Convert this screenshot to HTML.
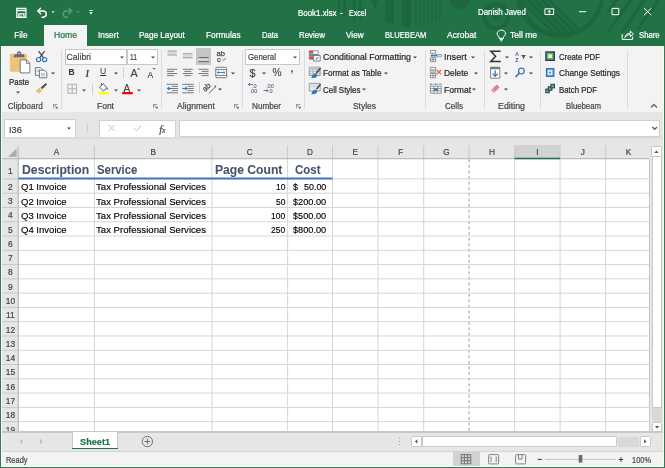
<!DOCTYPE html>
<html><head><meta charset="utf-8">
<style>
*{margin:0;padding:0;box-sizing:border-box}
html,body{width:665px;height:468px;overflow:hidden;background:#217346}
.a{position:absolute;display:block}
.t{position:absolute;white-space:nowrap;font-family:"Liberation Sans",sans-serif;line-height:1}
</style></head><body>
<div class="a" style="left:0;top:0;width:665px;height:468px;overflow:hidden;will-change:transform">
<div class="a" style="left:0.00px;top:0.00px;width:665.00px;height:468.00px;background:#217346;"></div>
<svg class="a" style="left:0px;top:0px" width="665" height="46" viewBox="0 0 665 46">
<defs>
<clipPath id="cpA"><circle cx="410" cy="-32" r="59"/></clipPath>
<clipPath id="cpB"><circle cx="561" cy="-6.5" r="39.5"/></clipPath>
<clipPath id="cpT"><rect x="0" y="0" width="665" height="46"/></clipPath>
</defs>
<g fill="#1d673e" clip-path="url(#cpA)">
<path d="M371.5 0h6.5l-3.2 11z"/>
<path d="M385 0h9v40h-9z"/>
<path d="M401.6 0h9.3v40h-9.3z"/>
<path d="M415 0h1.6v40H415zM419 0h1.6v40H419zM423 0h1.6v40H423zM427 0h1.6v40H427zM431 0h1.6v40H431zM435 0h1.6v40H435zM439 0h1.6v40H439z"/>
</g>
<path d="M449.5 0a10 9 0 0 0 20 0z" fill="#1d673e"/>
<path d="M338 0h2v12.5h-2zM343.5 0h2.4v17.5h-2.4zM353 0h2.5v23h-2.5zM359 0h2.5v19h-2.5z" fill="#1d673e"/>
<circle cx="496.2" cy="16.5" r="12.1" fill="none" stroke="#1d673e" stroke-width="4.2"/>
<circle cx="496.2" cy="16.5" r="4.3" fill="#1d673e"/>
<circle cx="560" cy="-6" r="44" fill="#1d673e"/>
<circle cx="561" cy="-6.5" r="39.5" fill="#217346"/>
<g stroke="#1d673e" stroke-width="3.2" clip-path="url(#cpB)">
<path d="M519 -2l40 40M526 -2l40 40M533 -2l40 40M540 -2l40 40M547 -2l36 36"/>
</g>
<g stroke="#1d673e" stroke-width="3" clip-path="url(#cpT)">
<path d="M618 -2l-10 14M632 -2l-24 34M646 -2l-24 34M660 -2l-22 31"/>
</g>
</svg>
<svg class="a" style="left:0px;top:0px" width="665" height="26" viewBox="0 0 665 26">
<g fill="none" stroke="#fff" stroke-width="1.3">
<path d="M16.8 8.5h9.1v8.8h-9.1z"/>
<path d="M16.8 10.6h9.1"/>
<path d="M18.9 17.3v-3.5h5v3.5"/>
</g>
<path d="M20.2 15.6h1.6v1.7h-1.6z" fill="#fff"/>
<g fill="none" stroke="#fff" stroke-width="1.4" stroke-linecap="round" stroke-linejoin="round">
<path d="M38 11h5.2a3.1 3.1 0 0 1 0 6.2h-1.2"/>
<path d="M40.6 8.2L37.8 11l2.8 2.8"/>
</g>
<path d="M51.6 11.3h3l-1.5 1.8z" fill="#fff"/>
<g fill="none" stroke="#5f9d7a" stroke-width="1.4" stroke-linecap="round" stroke-linejoin="round">
<path d="M71.5 11h-5.2a3.1 3.1 0 0 0 0 6.2h1.2"/>
<path d="M68.9 8.2l2.8 2.8-2.8 2.8"/>
</g>
<path d="M76.6 11.3h3l-1.5 1.8z" fill="#5f9d7a"/>
<path d="M89.3 10h3.4v0.9h-3.4z M89.2 12.3h3.6l-1.8 2.1z" fill="#fff"/>
<g fill="none" stroke="#fff" stroke-width="1">
<path d="M544.9 8.8h8.7v5.7h-8.7z"/>
<path d="M549.25 13.8v-3.2M547.6 12l1.65-1.6 1.65 1.6"/>
</g>
<path d="M579 11.2h7.2v1h-7.2z" fill="#fff"/>
<path d="M612 8.4h6.8v6.3H612z" fill="none" stroke="#fff" stroke-width="1"/>
<path d="M644 8.2l7.3 7M651.3 8.2l-7.3 7" fill="none" stroke="#fff" stroke-width="1"/>
</svg>
<div class="t" style="left:297.80px;top:8.99px;font-size:8.4px;color:#ffffff;transform:scaleX(0.9478);transform-origin:0 0;-webkit-text-stroke:0.2px #ffffff;">Book1.xlsx</div>
<div class="t" style="left:340.40px;top:8.99px;font-size:8.4px;color:#ffffff;transform:scaleX(0.9651);transform-origin:0 0;-webkit-text-stroke:0.2px #ffffff;">-</div>
<div class="t" style="left:349.00px;top:8.99px;font-size:8.4px;color:#ffffff;transform:scaleX(0.8471);transform-origin:0 0;-webkit-text-stroke:0.2px #ffffff;">Excel</div>
<div class="t" style="left:477.90px;top:8.96px;font-size:8.2px;color:#ffffff;transform:scaleX(0.9641);transform-origin:0 0;-webkit-text-stroke:0.2px #ffffff;">Danish Javed</div>
<div class="a" style="left:44.30px;top:25.00px;width:42.50px;height:22.00px;background:#f3f3f3;"></div>
<div class="t" style="left:14.30px;top:31.96px;font-size:8.2px;color:#ffffff;-webkit-text-stroke:0.2px #ffffff;">File</div>
<div class="t" style="left:97.50px;top:31.96px;font-size:8.2px;color:#ffffff;transform:scaleX(1.0142);transform-origin:0 0;-webkit-text-stroke:0.2px #ffffff;">Insert</div>
<div class="t" style="left:138.90px;top:31.96px;font-size:8.2px;color:#ffffff;-webkit-text-stroke:0.2px #ffffff;">Page Layout</div>
<div class="t" style="left:205.80px;top:31.96px;font-size:8.2px;color:#ffffff;transform:scaleX(1.0124);transform-origin:0 0;-webkit-text-stroke:0.2px #ffffff;">Formulas</div>
<div class="t" style="left:261.90px;top:31.96px;font-size:8.2px;color:#ffffff;transform:scaleX(0.9295);transform-origin:0 0;-webkit-text-stroke:0.2px #ffffff;">Data</div>
<div class="t" style="left:299.30px;top:31.96px;font-size:8.2px;color:#ffffff;transform:scaleX(0.9670);transform-origin:0 0;-webkit-text-stroke:0.2px #ffffff;">Review</div>
<div class="t" style="left:346.00px;top:31.96px;font-size:8.2px;color:#ffffff;-webkit-text-stroke:0.2px #ffffff;">View</div>
<div class="t" style="left:384.50px;top:31.96px;font-size:8.2px;color:#ffffff;transform:scaleX(0.9270);transform-origin:0 0;-webkit-text-stroke:0.2px #ffffff;">BLUEBEAM</div>
<div class="t" style="left:446.90px;top:31.96px;font-size:8.2px;color:#ffffff;transform:scaleX(1.0368);transform-origin:0 0;-webkit-text-stroke:0.2px #ffffff;">Acrobat</div>
<div class="t" style="left:510.30px;top:31.96px;font-size:8.2px;color:#ffffff;transform:scaleX(1.0433);transform-origin:0 0;-webkit-text-stroke:0.2px #ffffff;">Tell me</div>
<div class="t" style="left:638.60px;top:31.96px;font-size:8.2px;color:#ffffff;transform:scaleX(0.9460);transform-origin:0 0;-webkit-text-stroke:0.2px #ffffff;">Share</div>
<div class="t" style="left:53.70px;top:31.29px;font-size:8.4px;color:#217346;transform:scaleX(1.0309);transform-origin:0 0;-webkit-text-stroke:0.2px #217346;">Home</div>
<svg class="a" style="left:0px;top:25px" width="665" height="21" viewBox="0 25 665 21">
<g fill="none" stroke="#fff" stroke-width="1">
<path d="M499.8 39.6h3M500.3 40.8h2"/>
<path d="M499.2 38.4v-1.6A4.2 3.6 0 1 1 503.4 36.8v1.6z"/>
<path d="M622.2 34v5.4h10.4v-2.8"/>
<path d="M624.8 37.6c0.6-3 2.6-4.4 5.6-4.4v-2.1l3 2.8-3 2.8v-2.1c-2.6 0-4.2 1.1-5.6 3z"/>
</g>
</svg>
<div class="a" style="left:1.00px;top:46.00px;width:663.00px;height:66.00px;background:#f3f3f3;"></div>
<div class="a" style="left:1.00px;top:111.50px;width:663.00px;height:1.00px;background:#d8d8d8;"></div>
<div class="a" style="left:61.40px;top:49.50px;width:1.00px;height:59.00px;background:#dcdcdc;"></div>
<div class="a" style="left:161.00px;top:49.50px;width:1.00px;height:59.00px;background:#dcdcdc;"></div>
<div class="a" style="left:241.80px;top:49.50px;width:1.00px;height:59.00px;background:#dcdcdc;"></div>
<div class="a" style="left:303.80px;top:49.50px;width:1.00px;height:59.00px;background:#dcdcdc;"></div>
<div class="a" style="left:424.50px;top:49.50px;width:1.00px;height:59.00px;background:#dcdcdc;"></div>
<div class="a" style="left:484.20px;top:49.50px;width:1.00px;height:59.00px;background:#dcdcdc;"></div>
<div class="a" style="left:539.50px;top:49.50px;width:1.00px;height:59.00px;background:#dcdcdc;"></div>
<div class="a" style="left:627.30px;top:49.50px;width:1.00px;height:59.00px;background:#dcdcdc;"></div>
<div class="t" style="left:7.70px;top:103.46px;font-size:8.2px;color:#444;-webkit-text-stroke:0.2px #444;">Clipboard</div>
<div class="t" style="left:97.00px;top:103.46px;font-size:8.2px;color:#444;transform:scaleX(1.0361);transform-origin:0 0;-webkit-text-stroke:0.2px #444;">Font</div>
<div class="t" style="left:176.50px;top:103.46px;font-size:8.2px;color:#444;transform:scaleX(1.0421);transform-origin:0 0;-webkit-text-stroke:0.2px #444;">Alignment</div>
<div class="t" style="left:251.50px;top:103.46px;font-size:8.2px;color:#444;transform:scaleX(0.9943);transform-origin:0 0;-webkit-text-stroke:0.2px #444;">Number</div>
<div class="t" style="left:352.50px;top:103.46px;font-size:8.2px;color:#444;transform:scaleX(1.0300);transform-origin:0 0;-webkit-text-stroke:0.2px #444;">Styles</div>
<div class="t" style="left:445.00px;top:103.46px;font-size:8.2px;color:#444;transform:scaleX(0.9876);transform-origin:0 0;-webkit-text-stroke:0.2px #444;">Cells</div>
<div class="t" style="left:498.00px;top:103.46px;font-size:8.2px;color:#444;transform:scaleX(1.0768);transform-origin:0 0;-webkit-text-stroke:0.2px #444;">Editing</div>
<div class="t" style="left:566.00px;top:103.46px;font-size:8.2px;color:#444;transform:scaleX(0.9479);transform-origin:0 0;-webkit-text-stroke:0.2px #444;">Bluebeam</div>
<svg class="a" style="left:53.2px;top:104.1px" width="5" height="5" viewBox="0 0 5 5"><path d="M0.4 4.2V0.4h3.8" fill="none" stroke="#777" stroke-width="0.8"/><path d="M1.5 1.5l2.3 2.3" stroke="#555" stroke-width="0.8"/><path d="M4.6 2.2v2.4H2.2z" fill="#555"/></svg>
<svg class="a" style="left:153.2px;top:104.1px" width="5" height="5" viewBox="0 0 5 5"><path d="M0.4 4.2V0.4h3.8" fill="none" stroke="#777" stroke-width="0.8"/><path d="M1.5 1.5l2.3 2.3" stroke="#555" stroke-width="0.8"/><path d="M4.6 2.2v2.4H2.2z" fill="#555"/></svg>
<svg class="a" style="left:233.7px;top:104.1px" width="5" height="5" viewBox="0 0 5 5"><path d="M0.4 4.2V0.4h3.8" fill="none" stroke="#777" stroke-width="0.8"/><path d="M1.5 1.5l2.3 2.3" stroke="#555" stroke-width="0.8"/><path d="M4.6 2.2v2.4H2.2z" fill="#555"/></svg>
<svg class="a" style="left:295.7px;top:104.1px" width="5" height="5" viewBox="0 0 5 5"><path d="M0.4 4.2V0.4h3.8" fill="none" stroke="#777" stroke-width="0.8"/><path d="M1.5 1.5l2.3 2.3" stroke="#555" stroke-width="0.8"/><path d="M4.6 2.2v2.4H2.2z" fill="#555"/></svg>
<svg class="a" style="left:650px;top:103px" width="8" height="6" viewBox="0 0 8 6"><path d="M1 4.5l3-3 3 3" fill="none" stroke="#555" stroke-width="1.1"/></svg>
<svg class="a" style="left:0px;top:46px" width="62" height="65" viewBox="0 46 62 65">
<rect x="9.9" y="53.7" width="17.1" height="18" rx="1.2" fill="#ebc47a"/>
<path d="M13.6 57.2l0.8-3h2.6v-0.8a2.1 2.1 0 0 1 4.2 0v0.8h2.6l0.8 3z" fill="#6a6a6a"/>
<circle cx="19.1" cy="53.6" r="0.75" fill="#f3f3f3"/>
<path d="M20.2 59.9h6.4l3.2 3.2v9.8h-9.6z" fill="#fff" stroke="#6d6d6d" stroke-width="0.9"/>
<path d="M26.4 59.9v3.4h3.4" fill="none" stroke="#6d6d6d" stroke-width="0.9"/>
</svg>
<div class="t" style="left:8.50px;top:77.62px;font-size:8.6px;color:#262626;transform:scaleX(0.9185);transform-origin:0 0;-webkit-text-stroke:0.2px #262626;">Paste</div>
<svg class="a" style="left:16.00px;top:90.80px" width="4" height="3" viewBox="0 0 4 3"><path d="M0 0.5h4L2 2.6z" fill="#444"/></svg>
<svg class="a" style="left:0px;top:46px" width="62" height="65" viewBox="0 46 62 65">
<g fill="none" stroke="#444" stroke-width="1.2"><path d="M38.6 51.2l5 6.6M44.6 51.2l-5 6.6"/></g>
<circle cx="38.6" cy="59.6" r="2.1" fill="none" stroke="#2e75b6" stroke-width="1.2"/>
<circle cx="44.6" cy="59.6" r="2.1" fill="none" stroke="#2e75b6" stroke-width="1.2"/>
<path d="M35.4 67.6h5l2 2v5.8h-7z" fill="#fff" stroke="#666" stroke-width="0.9"/>
<path d="M36.6 70h3.4M36.6 71.6h3.4" stroke="#7fa7d3" stroke-width="0.8"/>
<path d="M39.4 70.2h5.2l2.2 2.2v5.4h-7.4z" fill="#fff" stroke="#666" stroke-width="0.9"/>
<path d="M40.8 72.8h4.4v3.6h-4.4z" fill="#b4cfec"/>
<path d="M35.8 91l3.4-3.6 3.2 3.2-3.6 3.2z" fill="#e8c175"/>
<path d="M39.6 87.2l3.4 3.2" stroke="#f3f3f3" stroke-width="0.8"/>
<path d="M41.4 88.4l5-4.6" stroke="#555" stroke-width="2.2"/>
</svg>
<svg class="a" style="left:51.00px;top:71.60px" width="4" height="3" viewBox="0 0 4 3"><path d="M0 0.5h4L2 2.6z" fill="#444"/></svg>
<div class="a" style="left:65.30px;top:48.60px;width:62.20px;height:16.10px;background:#fff;border:1px solid #c8c8c8"></div>
<div class="a" style="left:127.30px;top:48.60px;width:30.30px;height:16.10px;background:#fff;border:1px solid #c8c8c8"></div>
<div class="t" style="left:66.60px;top:52.62px;font-size:8.6px;color:#444;-webkit-text-stroke:0.2px #444;">Calibri</div>
<div class="t" style="left:130.30px;top:52.24px;font-size:9.4px;color:#444;transform:scaleX(0.7276);transform-origin:0 0;-webkit-text-stroke:0.2px #444;">11</div>
<svg class="a" style="left:120.00px;top:55.80px" width="4" height="3" viewBox="0 0 4 3"><path d="M0 0.5h4L2 2.6z" fill="#444"/></svg>
<svg class="a" style="left:150.70px;top:55.80px" width="4" height="3" viewBox="0 0 4 3"><path d="M0 0.5h4L2 2.6z" fill="#444"/></svg>
<div class="t" style="left:68.4px;top:67.9px;font-size:8.6px;font-weight:bold;color:#333">B</div>
<div class="t" style="left:85.6px;top:68.6px;font-size:9.6px;font-style:italic;font-weight:bold;font-family:'Liberation Serif';color:#444">I</div>
<div class="t" style="left:100.1px;top:67.4px;font-size:8.6px;color:#333;text-decoration:underline">U</div>
<svg class="a" style="left:113.60px;top:71.80px" width="4" height="3" viewBox="0 0 4 3"><path d="M0 0.5h4L2 2.6z" fill="#444"/></svg>
<div class="a" style="left:123.30px;top:67.00px;width:0.80px;height:11.00px;background:#d0d0d0;"></div>
<div class="t" style="left:130.4px;top:68.0px;font-size:10.8px;color:#444;-webkit-text-stroke:0.15px #444">A</div>
<div class="t" style="left:147.4px;top:70.6px;font-size:8.6px;color:#444;-webkit-text-stroke:0.12px #444">A</div>
<svg class="a" style="left:0px;top:46px" width="665" height="65" viewBox="0 46 665 65">
<path d="M137 69.5l1.6-1.8 1.6 1.8z" fill="#2e75b6"/>
<path d="M152.5 68l1.6 1.8 1.6-1.8z" fill="#2e75b6"/>
<g fill="none" stroke="#b4b4b4" stroke-width="1.1"><path d="M67.9 84.2h8.6v9h-8.6zM72.2 84.2v9M67.9 88.7h8.6"/></g>
<path d="M101.5 83.2v2.2" stroke="#555" stroke-width="0.9"/>
<path d="M99.6 87.2l3.6-3.4 3.8 3.8-3.6 3.4z" fill="#fff" stroke="#555" stroke-width="1"/>
<path d="M106.4 87.2c1.4 0.5 1.9 1.8 1.5 2.8c-1-0.5-1.8-1.5-1.5-2.8z" fill="#2e75b6"/>
<path d="M98.4 91.9h10.6v2.4h-10.6z" fill="#ffff00"/>
<path d="M122.2 91.9h10.6v2.4h-10.6z" fill="#ff0000"/>
</svg>
<svg class="a" style="left:82.00px;top:89.30px" width="4" height="3" viewBox="0 0 4 3"><path d="M0 0.5h4L2 2.6z" fill="#444"/></svg>
<div class="t" style="left:123.4px;top:84.4px;font-size:10px;color:#444;-webkit-text-stroke:0.15px #444">A</div>
<div class="a" style="left:92.20px;top:84.00px;width:0.80px;height:11.00px;background:#d0d0d0;"></div>
<svg class="a" style="left:113.50px;top:89.30px" width="4" height="3" viewBox="0 0 4 3"><path d="M0 0.5h4L2 2.6z" fill="#444"/></svg>
<svg class="a" style="left:137.00px;top:89.30px" width="4" height="3" viewBox="0 0 4 3"><path d="M0 0.5h4L2 2.6z" fill="#444"/></svg>
<div class="a" style="left:196.10px;top:48.40px;width:15.00px;height:16.20px;background:#c5c5c5;"></div>
<svg class="a" style="left:0px;top:46px" width="665" height="65" viewBox="0 46 665 65"><path d="M167.5 51.8h9.3v2.4h-9.3z" fill="#d9d9d9"/><path d="M167.5 51.0h9.3" stroke="#8c8c8c" stroke-width="0.9"/><path d="M167.5 55.0h9.3" stroke="#8c8c8c" stroke-width="0.9"/><path d="M182.9 54.599999999999994h9.8v2.4h-9.8z" fill="#d9d9d9"/><path d="M182.9 53.8h9.8" stroke="#8c8c8c" stroke-width="0.9"/><path d="M182.9 57.8h9.8" stroke="#8c8c8c" stroke-width="0.9"/><path d="M198.5 58.4h10.2v2.4h-10.2z" fill="#d9d9d9"/><path d="M198.5 57.6h10.2" stroke="#5a5a5a" stroke-width="0.9"/><path d="M198.5 61.6h10.2" stroke="#5a5a5a" stroke-width="0.9"/><text x="216.6" y="56.4" font-size="7.6" fill="#4a4a4a" font-family="Liberation Sans" stroke="#4a4a4a" stroke-width="0.25">ab</text><text x="216.9" y="61.6" font-size="7.6" fill="#4a4a4a" font-family="Liberation Sans" stroke="#4a4a4a" stroke-width="0.25">c</text><path d="M222.3 59.3l1.2 1.2 2.3-2.6" fill="none" stroke="#2e75b6" stroke-width="0.9"/><path d="M167.0 69.3h10.2" stroke="#6b6b6b" stroke-width="0.9"/><path d="M182.70000000000002 69.3h10.2" stroke="#6b6b6b" stroke-width="0.9"/><path d="M198.4 69.3h10.2" stroke="#6b6b6b" stroke-width="0.9"/><path d="M167.0 71.4h7.0" stroke="#6b6b6b" stroke-width="0.9"/><path d="M184.3 71.4h7.0" stroke="#6b6b6b" stroke-width="0.9"/><path d="M201.6 71.4h7.0" stroke="#6b6b6b" stroke-width="0.9"/><path d="M167.0 73.5h10.2" stroke="#6b6b6b" stroke-width="0.9"/><path d="M182.70000000000002 73.5h10.2" stroke="#6b6b6b" stroke-width="0.9"/><path d="M198.4 73.5h10.2" stroke="#6b6b6b" stroke-width="0.9"/><path d="M167.0 75.6h7.0" stroke="#6b6b6b" stroke-width="0.9"/><path d="M184.3 75.6h7.0" stroke="#6b6b6b" stroke-width="0.9"/><path d="M201.6 75.6h7.0" stroke="#6b6b6b" stroke-width="0.9"/><rect x="215.8" y="67.3" width="10.8" height="10.4" rx="1" fill="#fff" stroke="#6b6b6b" stroke-width="0.9"/><path d="M215.8 69.6h10.8M215.8 75.4h10.8" stroke="#6b6b6b" stroke-width="0.9"/><path d="M217.4 72.5h7.6M218.8 71.3l-1.4 1.2 1.4 1.2M223.6 71.3l1.4 1.2-1.4 1.2" fill="none" stroke="#2e75b6" stroke-width="0.9"/><path d="M166.6 84.3h11.4" stroke="#6b6b6b" stroke-width="0.9"/><path d="M166.6 92.8h11.4" stroke="#6b6b6b" stroke-width="0.9"/><path d="M171.79999999999998 86.4h6.2" stroke="#6b6b6b" stroke-width="0.9"/><path d="M171.79999999999998 88.5h6.2" stroke="#6b6b6b" stroke-width="0.9"/><path d="M171.79999999999998 90.6h6.2" stroke="#6b6b6b" stroke-width="0.9"/><path d="M172.3 88.5h-4.6" stroke="#2e75b6" stroke-width="1.2"/><path d="M169.3 86.4l-2.6 2.1 2.6 2.1z" fill="#2e75b6"/><path d="M182.3 84.3h11.4" stroke="#6b6b6b" stroke-width="0.9"/><path d="M182.3 92.8h11.4" stroke="#6b6b6b" stroke-width="0.9"/><path d="M187.5 86.4h6.2" stroke="#6b6b6b" stroke-width="0.9"/><path d="M187.5 88.5h6.2" stroke="#6b6b6b" stroke-width="0.9"/><path d="M187.5 90.6h6.2" stroke="#6b6b6b" stroke-width="0.9"/><path d="M182.3 88.5h4.6" stroke="#2e75b6" stroke-width="1.2"/><path d="M185.3 86.4l2.6 2.1-2.6 2.1z" fill="#2e75b6"/><text x="0" y="0" font-size="7.8" fill="#4a4a4a" font-family="Liberation Sans" stroke="#4a4a4a" stroke-width="0.25" transform="translate(205.2 92) rotate(-45)">ab</text><path d="M209 93.3l6.6-6.6" stroke="#505050" stroke-width="0.9"/><path d="M214 85.8l2.2-0.4-0.4 2.2z" fill="#505050"/></svg>
<svg class="a" style="left:230.80px;top:71.50px" width="4" height="3" viewBox="0 0 4 3"><path d="M0 0.5h4L2 2.6z" fill="#444"/></svg>
<div class="a" style="left:198.50px;top:82.20px;width:0.80px;height:11.30px;background:#d0d0d0;"></div>
<svg class="a" style="left:218.40px;top:87.50px" width="4" height="3" viewBox="0 0 4 3"><path d="M0 0.5h4L2 2.6z" fill="#444"/></svg>
<div class="a" style="left:245.00px;top:48.60px;width:55.00px;height:16.10px;background:#fff;border:1px solid #c8c8c8"></div>
<div class="t" style="left:247.50px;top:52.62px;font-size:8.6px;color:#444;transform:scaleX(0.9151);transform-origin:0 0;-webkit-text-stroke:0.2px #444;">General</div>
<svg class="a" style="left:293.00px;top:55.80px" width="4" height="3" viewBox="0 0 4 3"><path d="M0 0.5h4L2 2.6z" fill="#444"/></svg>
<div class="t" style="left:249.6px;top:68.3px;font-size:10.6px;color:#444;-webkit-text-stroke:0.2px #444">$</div>
<svg class="a" style="left:262.00px;top:71.80px" width="4" height="3" viewBox="0 0 4 3"><path d="M0 0.5h4L2 2.6z" fill="#444"/></svg>
<div class="t" style="left:272.6px;top:68.4px;font-size:10.2px;color:#444;-webkit-text-stroke:0.15px #444">%</div>
<div class="t" style="left:290.6px;top:63.8px;font-size:10px;font-weight:bold;color:#444">,</div>
<svg class="a" style="left:0px;top:46px" width="665" height="65" viewBox="0 46 665 65">
<text x="252" y="87.5" font-size="5.6" fill="#444" font-family="Liberation Sans">.0</text>
<text x="249.5" y="93.3" font-size="5.6" fill="#444" font-family="Liberation Sans">.00</text>
<path d="M253 84.5h-4.5M250 83l-1.5 1.5 1.5 1.5" fill="none" stroke="#2e75b6" stroke-width="0.9"/>
<text x="266" y="87.5" font-size="5.6" fill="#444" font-family="Liberation Sans">.00</text>
<text x="268" y="93.3" font-size="5.6" fill="#444" font-family="Liberation Sans">.0</text>
<path d="M263.5 90.5h4.5M266.5 89l1.5 1.5-1.5 1.5" fill="none" stroke="#2e75b6" stroke-width="0.9"/>
</svg>
<svg class="a" style="left:0px;top:46px" width="665" height="65" viewBox="0 46 665 65">
<path d="M309.3 50.8h9v8.4h-9z" fill="#fff" stroke="#7a7a7a" stroke-width="0.8"/>
<path d="M309.3 50.8h4v2.8h-4z" fill="#e0492f"/>
<path d="M309.3 53.9h8.5v2h-8.5z" fill="#4a86d0"/>
<path d="M309.3 56.2h4v3h-4z" fill="#e0492f"/>
<path d="M313.6 55.5h6.6v5.6h-6.6z" fill="#fff" stroke="#777" stroke-width="0.9"/>
<path d="M315.8 59.6l2.6-2.4" stroke="#333" stroke-width="1"/>
<path d="M309.3 67.2h10.8v8.4h-10.8z" fill="#e8eef6" stroke="#7a7a7a" stroke-width="0.8"/>
<path d="M309.3 69.5h10.8M309.3 71.6h10.8M309.3 73.6h10.8M312.9 67.2v8.4M316.5 67.2v8.4" stroke="#9a9a9a" stroke-width="0.6"/>
<path d="M309.3 67.2h10.8v2.3h-10.8z" fill="#c7c7c7"/>
<path d="M320.5 68l-4 5" stroke="#444" stroke-width="1.5"/>
<path d="M311.3 78.2l1.2-3.2 2.6-1.8 2.3 1.6-1.2 2.6z" fill="#2e75b6"/>
<path d="M309.3 83.4h10.8v7.6h-10.8z" fill="#fff" stroke="#7a7a7a" stroke-width="0.8"/>
<path d="M310.3 84.4h8.8v3.2h-8.8z" fill="#c9d9ec"/>
<path d="M310.3 87.8h8.8v2h-8.8z" fill="#e3ebf5"/>
<path d="M320.5 84.2l-4 5" stroke="#444" stroke-width="1.5"/>
<path d="M311.3 94.4l1.2-3.2 2.6-1.8 2.3 1.6-1.2 2.6z" fill="#2e75b6"/>
</svg>
<div class="t" style="left:322.80px;top:53.12px;font-size:8.6px;color:#262626;transform:scaleX(1.0171);transform-origin:0 0;-webkit-text-stroke:0.2px #262626;">Conditional Formatting</div>
<svg class="a" style="left:412.70px;top:55.80px" width="4" height="3" viewBox="0 0 4 3"><path d="M0 0.5h4L2 2.6z" fill="#444"/></svg>
<div class="t" style="left:322.80px;top:69.42px;font-size:8.6px;color:#262626;transform:scaleX(0.9512);transform-origin:0 0;-webkit-text-stroke:0.2px #262626;">Format as Table</div>
<svg class="a" style="left:383.50px;top:71.80px" width="4" height="3" viewBox="0 0 4 3"><path d="M0 0.5h4L2 2.6z" fill="#444"/></svg>
<div class="t" style="left:322.80px;top:85.82px;font-size:8.6px;color:#262626;transform:scaleX(0.9231);transform-origin:0 0;-webkit-text-stroke:0.2px #262626;">Cell Styles</div>
<svg class="a" style="left:362.00px;top:88.00px" width="4" height="3" viewBox="0 0 4 3"><path d="M0 0.5h4L2 2.6z" fill="#444"/></svg>
<svg class="a" style="left:0px;top:46px" width="665" height="65" viewBox="0 46 665 65">
<g fill="#fff" stroke="#7a7a7a" stroke-width="0.8">
<path d="M430.4 50.4h5.2v2.8h-5.2z"/>
<path d="M430.4 57.8h5.2v3.8h-5.2zM430.4 59.7h5.2M433 57.8v3.8"/>
<path d="M430.4 67.4h5.2v2.6h-5.2z"/>
<path d="M430.4 73.4h5.2v4.4h-5.2zM430.4 75.6h5.2M433 73.4v4.4"/>
<path d="M430.4 86.2h10.8v7h-10.8zM430.4 88.5h10.8M430.4 90.8h10.8M433.9 86.2v7M437.6 86.2v7"/>
</g>
<path d="M434 54.5h7.5v2.3H434z" fill="#d0dcea" stroke="#7a7a7a" stroke-width="0.6"/>
<path d="M437.5 55.6h-6.6M432.8 54l-1.9 1.6 1.9 1.6" fill="none" stroke="#2e75b6" stroke-width="1"/>
<path d="M430.4 70.6h5.2v2.2h-5.2z" fill="#c9d9ec" stroke="#7a7a7a" stroke-width="0.6"/>
<path d="M436.6 69.8l4.6 4.6M441.2 69.8l-4.6 4.6" stroke="#e8533f" stroke-width="1.1"/>
<path d="M434 88.5h3.6v2.3H434z" fill="#2e75b6"/>
<path d="M430.6 84.2h10.6" stroke="#2e75b6" stroke-width="0.8" stroke-dasharray="1.2 0.8"/>
<path d="M430.6 83.2v2M441 83.2v2M435.8 83.2v2" stroke="#2e75b6" stroke-width="0.7"/>
</svg>
<div class="t" style="left:443.70px;top:53.12px;font-size:8.6px;color:#262626;transform:scaleX(1.0600);transform-origin:0 0;-webkit-text-stroke:0.2px #262626;">Insert</div>
<svg class="a" style="left:471.00px;top:55.80px" width="4" height="3" viewBox="0 0 4 3"><path d="M0 0.5h4L2 2.6z" fill="#444"/></svg>
<div class="t" style="left:443.70px;top:69.42px;font-size:8.6px;color:#262626;transform:scaleX(0.9775);transform-origin:0 0;-webkit-text-stroke:0.2px #262626;">Delete</div>
<svg class="a" style="left:473.80px;top:71.80px" width="4" height="3" viewBox="0 0 4 3"><path d="M0 0.5h4L2 2.6z" fill="#444"/></svg>
<div class="t" style="left:443.70px;top:85.82px;font-size:8.6px;color:#262626;transform:scaleX(0.9950);transform-origin:0 0;-webkit-text-stroke:0.2px #262626;">Format</div>
<svg class="a" style="left:472.30px;top:88.00px" width="4" height="3" viewBox="0 0 4 3"><path d="M0 0.5h4L2 2.6z" fill="#444"/></svg>
<svg class="a" style="left:0px;top:46px" width="665" height="65" viewBox="0 46 665 65">
<path d="M500.6 51.2h-9.8l4.8 5.1-4.8 5.1h10" fill="none" stroke="#333" stroke-width="1.5" stroke-linejoin="miter"/>
<text x="514.9" y="55.7" font-size="5.4" font-weight="bold" fill="#2e75b6" font-family="Liberation Sans">A</text>
<text x="515.2" y="61.6" font-size="5.4" font-weight="bold" fill="#7030a0" font-family="Liberation Sans">Z</text>
<path d="M521 55h5.2l-2 2.3v1.8l-1.2-0.4v-1.4z" fill="#555"/>
<path d="M490.6 67.2h9.2v11h-9.2z" fill="#fff" stroke="#777" stroke-width="0.9"/>
<path d="M490.6 67.2h9.2v2h-9.2z" fill="#777"/>
<path d="M495.2 70.5v5.6" stroke="#2e75b6" stroke-width="1.3"/>
<path d="M492.6 73.6l2.6 2.8 2.6-2.8" fill="none" stroke="#2e75b6" stroke-width="1.3"/>
<circle cx="521.4" cy="71.1" r="2.9" fill="none" stroke="#2e75b6" stroke-width="1.2"/>
<path d="M519.3 73.2l-3.2 3.2" stroke="#2e75b6" stroke-width="1.5" stroke-linecap="round"/>
<path d="M491.2 90l5.6-5.6 2.8 2.8-5.6 5.6z" fill="#e8788a"/>
<path d="M492.6 88.6l2.8 2.8" stroke="#f3f3f3" stroke-width="0.7"/>
</svg>
<svg class="a" style="left:505.00px;top:55.80px" width="4" height="3" viewBox="0 0 4 3"><path d="M0 0.5h4L2 2.6z" fill="#444"/></svg>
<svg class="a" style="left:528.50px;top:55.80px" width="4" height="3" viewBox="0 0 4 3"><path d="M0 0.5h4L2 2.6z" fill="#444"/></svg>
<svg class="a" style="left:503.70px;top:71.80px" width="4" height="3" viewBox="0 0 4 3"><path d="M0 0.5h4L2 2.6z" fill="#444"/></svg>
<svg class="a" style="left:528.50px;top:71.80px" width="4" height="3" viewBox="0 0 4 3"><path d="M0 0.5h4L2 2.6z" fill="#444"/></svg>
<svg class="a" style="left:503.70px;top:88.30px" width="4" height="3" viewBox="0 0 4 3"><path d="M0 0.5h4L2 2.6z" fill="#444"/></svg>
<svg class="a" style="left:0px;top:46px" width="665" height="65" viewBox="0 46 665 65">
<path d="M545.2 51.3h9.8v9.7h-9.8z" fill="#1f3f73"/>
<path d="M546.6 52.7h7v6.9h-7z" fill="#6fb544"/>
<path d="M548.2 54.3h3.8v3.7h-3.8z" fill="#e9f5df"/>
<path d="M545.9 68h8.5v9h-8.5z" fill="#2e75b6"/>
<path d="M547.2 69.4h5.9v6.2h-5.9z" fill="#8fbbe6"/>
<path d="M548.2 70.4h3.9v4.2h-3.9z" fill="#fff"/>
<path d="M549.2 71.6h1.9v1.9h-1.9z" fill="#2e75b6"/>
<path d="M545.2 88.6h4.6v4.6h-4.6z" fill="#1f3f73"/><path d="M546.2 89.6h2.6v2.6h-2.6z" fill="#6fb544"/>
<path d="M547.8 86.2h4.6v4.6h-4.6z" fill="#1f3f73"/><path d="M548.8 87.2h2.6v2.6h-2.6z" fill="#6fb544"/>
<path d="M550.4 83.8h4.6v4.6h-4.6z" fill="#1f3f73"/><path d="M551.4 84.8h2.6v2.6h-2.6z" fill="#6fb544"/>
</svg>
<div class="t" style="left:558.50px;top:53.12px;font-size:8.6px;color:#262626;transform:scaleX(0.9030);transform-origin:0 0;-webkit-text-stroke:0.2px #262626;">Create PDF</div>
<div class="t" style="left:558.50px;top:69.42px;font-size:8.6px;color:#262626;transform:scaleX(0.9593);transform-origin:0 0;-webkit-text-stroke:0.2px #262626;">Change Settings</div>
<div class="t" style="left:558.50px;top:85.82px;font-size:8.6px;color:#262626;transform:scaleX(0.9139);transform-origin:0 0;-webkit-text-stroke:0.2px #262626;">Batch PDF</div>
<div class="a" style="left:1.00px;top:111.50px;width:663.00px;height:28.00px;background:#e6e6e6;"></div>
<div class="a" style="left:4.10px;top:119.10px;width:72.30px;height:18.60px;background:#fff;border:1px solid #d0d0d0"></div>
<div class="t" style="left:9.40px;top:124.77px;font-size:9.6px;color:#444;transform:scaleX(0.9591);transform-origin:0 0;-webkit-text-stroke:0.2px #444;">I36</div>
<svg class="a" style="left:67.20px;top:127.30px" width="4" height="3" viewBox="0 0 4 3"><path d="M0 0.5h4L2 2.6z" fill="#444"/></svg>
<div class="a" style="left:98.50px;top:119.50px;width:77.70px;height:18.20px;background:#fff;border:1px solid #d0d0d0"></div>
<div class="a" style="left:179.00px;top:119.60px;width:481.20px;height:17.80px;background:#fff;border:1px solid #d0d0d0"></div>
<svg class="a" style="left:0px;top:111px" width="665" height="28" viewBox="0 111 665 28">
<circle cx="87.4" cy="125" r="0.6" fill="#999"/><circle cx="87.4" cy="128" r="0.6" fill="#999"/><circle cx="87.4" cy="131" r="0.6" fill="#999"/>
<path d="M108.5 125l6 6M114.5 125l-6 6" stroke="#c0c0c0" stroke-width="1"/>
<path d="M134 128.3l2.5 2.5 4.8-5.3" fill="none" stroke="#c0c0c0" stroke-width="1"/>
<path d="M652.4 127l2.3 2.4 2.3-2.4" fill="none" stroke="#555" stroke-width="1.3"/>
</svg>
<div class="t" style="left:159.2px;top:124.6px;font-size:10.5px;font-style:italic;font-family:'Liberation Serif';color:#444;-webkit-text-stroke:0.2px #444">f<span style="font-size:7.5px">x</span></div>
<div class="a" style="left:1.00px;top:139.40px;width:649.50px;height:292.30px;background:#fff;"></div>
<div class="a" style="left:1.00px;top:139.40px;width:649.50px;height:19.90px;background:#e6e6e6;"></div>
<div class="a" style="left:1.00px;top:137.40px;width:663.00px;height:1.80px;background:#dcdcdc;"></div>
<div class="a" style="left:1.00px;top:159.30px;width:17.50px;height:272.40px;background:#e6e6e6;"></div>
<div class="a" style="left:514.60px;top:145.40px;width:45.50px;height:12.70px;background:#d2d2d2;"></div>
<svg class="a" style="left:0px;top:0px" width="665" height="468" viewBox="0 0 665 468"><path d="M94.40 159.3V431.7" stroke="#d5d5d5" stroke-width="1"/><path d="M211.90 159.3V431.7" stroke="#d5d5d5" stroke-width="1"/><path d="M287.60 159.3V431.7" stroke="#d5d5d5" stroke-width="1"/><path d="M332.50 159.3V431.7" stroke="#d5d5d5" stroke-width="1"/><path d="M378.00 159.3V431.7" stroke="#d5d5d5" stroke-width="1"/><path d="M423.70 159.3V431.7" stroke="#d5d5d5" stroke-width="1"/><path d="M469.10 159.3V431.7" stroke="#9c9c9c" stroke-width="1" stroke-dasharray="3 2.6"/><path d="M514.60 159.3V431.7" stroke="#d5d5d5" stroke-width="1"/><path d="M560.10 159.3V431.7" stroke="#d5d5d5" stroke-width="1"/><path d="M605.70 159.3V431.7" stroke="#d5d5d5" stroke-width="1"/><path d="M651.20 159.3V431.7" stroke="#d5d5d5" stroke-width="1"/><path d="M18.5 178.90H650.5" stroke="#d5d5d5" stroke-width="1"/><path d="M18.5 193.18H650.5" stroke="#d5d5d5" stroke-width="1"/><path d="M18.5 207.46H650.5" stroke="#d5d5d5" stroke-width="1"/><path d="M18.5 221.74H650.5" stroke="#d5d5d5" stroke-width="1"/><path d="M18.5 236.02H650.5" stroke="#d5d5d5" stroke-width="1"/><path d="M18.5 250.30H650.5" stroke="#d5d5d5" stroke-width="1"/><path d="M18.5 264.58H650.5" stroke="#d5d5d5" stroke-width="1"/><path d="M18.5 278.86H650.5" stroke="#d5d5d5" stroke-width="1"/><path d="M18.5 293.14H650.5" stroke="#d5d5d5" stroke-width="1"/><path d="M18.5 307.42H650.5" stroke="#d5d5d5" stroke-width="1"/><path d="M18.5 321.70H650.5" stroke="#d5d5d5" stroke-width="1"/><path d="M18.5 335.98H650.5" stroke="#d5d5d5" stroke-width="1"/><path d="M18.5 350.26H650.5" stroke="#d5d5d5" stroke-width="1"/><path d="M18.5 364.54H650.5" stroke="#d5d5d5" stroke-width="1"/><path d="M18.5 378.82H650.5" stroke="#d5d5d5" stroke-width="1"/><path d="M18.5 393.10H650.5" stroke="#d5d5d5" stroke-width="1"/><path d="M18.5 407.38H650.5" stroke="#d5d5d5" stroke-width="1"/><path d="M18.5 421.66H650.5" stroke="#d5d5d5" stroke-width="1"/><path d="M18.5 435.94H650.5" stroke="#d5d5d5" stroke-width="1"/><path d="M18.5 450.22H650.5" stroke="#d5d5d5" stroke-width="1"/><path d="M94.40 145.4V159.3" stroke="#c8c8c8" stroke-width="1"/><path d="M211.90 145.4V159.3" stroke="#c8c8c8" stroke-width="1"/><path d="M287.60 145.4V159.3" stroke="#c8c8c8" stroke-width="1"/><path d="M332.50 145.4V159.3" stroke="#c8c8c8" stroke-width="1"/><path d="M378.00 145.4V159.3" stroke="#c8c8c8" stroke-width="1"/><path d="M423.70 145.4V159.3" stroke="#c8c8c8" stroke-width="1"/><path d="M469.10 145.4V159.3" stroke="#c8c8c8" stroke-width="1"/><path d="M514.60 145.4V159.3" stroke="#c8c8c8" stroke-width="1"/><path d="M560.10 145.4V159.3" stroke="#c8c8c8" stroke-width="1"/><path d="M605.70 145.4V159.3" stroke="#c8c8c8" stroke-width="1"/><path d="M651.20 145.4V159.3" stroke="#c8c8c8" stroke-width="1"/><path d="M1 178.90H18.5" stroke="#c8c8c8" stroke-width="1"/><path d="M1 193.18H18.5" stroke="#c8c8c8" stroke-width="1"/><path d="M1 207.46H18.5" stroke="#c8c8c8" stroke-width="1"/><path d="M1 221.74H18.5" stroke="#c8c8c8" stroke-width="1"/><path d="M1 236.02H18.5" stroke="#c8c8c8" stroke-width="1"/><path d="M1 250.30H18.5" stroke="#c8c8c8" stroke-width="1"/><path d="M1 264.58H18.5" stroke="#c8c8c8" stroke-width="1"/><path d="M1 278.86H18.5" stroke="#c8c8c8" stroke-width="1"/><path d="M1 293.14H18.5" stroke="#c8c8c8" stroke-width="1"/><path d="M1 307.42H18.5" stroke="#c8c8c8" stroke-width="1"/><path d="M1 321.70H18.5" stroke="#c8c8c8" stroke-width="1"/><path d="M1 335.98H18.5" stroke="#c8c8c8" stroke-width="1"/><path d="M1 350.26H18.5" stroke="#c8c8c8" stroke-width="1"/><path d="M1 364.54H18.5" stroke="#c8c8c8" stroke-width="1"/><path d="M1 378.82H18.5" stroke="#c8c8c8" stroke-width="1"/><path d="M1 393.10H18.5" stroke="#c8c8c8" stroke-width="1"/><path d="M1 407.38H18.5" stroke="#c8c8c8" stroke-width="1"/><path d="M1 421.66H18.5" stroke="#c8c8c8" stroke-width="1"/><path d="M1 435.94H18.5" stroke="#c8c8c8" stroke-width="1"/><path d="M1 450.22H18.5" stroke="#c8c8c8" stroke-width="1"/><path d="M1 158.70H650.5" stroke="#bdbdbd" stroke-width="1.2"/><path d="M18.20 145.4V431.7" stroke="#bdbdbd" stroke-width="1.2"/><path d="M514.60 158.50H560.10" stroke="#217346" stroke-width="1.6"/><path d="M16.6 148.6V156.8H8.2z" fill="#ababab"/><path d="M18.5 178.5H332.5" stroke="#4472c4" stroke-width="2"/></svg>
<div class="t" style="left:36.45px;width:40px;text-align:center;top:149.26px;font-size:8.2px;color:#444;-webkit-text-stroke:0.2px #444">A</div>
<div class="t" style="left:133.15px;width:40px;text-align:center;top:149.26px;font-size:8.2px;color:#444;-webkit-text-stroke:0.2px #444">B</div>
<div class="t" style="left:229.75px;width:40px;text-align:center;top:149.26px;font-size:8.2px;color:#444;-webkit-text-stroke:0.2px #444">C</div>
<div class="t" style="left:290.05px;width:40px;text-align:center;top:149.26px;font-size:8.2px;color:#444;-webkit-text-stroke:0.2px #444">D</div>
<div class="t" style="left:335.25px;width:40px;text-align:center;top:149.26px;font-size:8.2px;color:#444;-webkit-text-stroke:0.2px #444">E</div>
<div class="t" style="left:380.85px;width:40px;text-align:center;top:149.26px;font-size:8.2px;color:#444;-webkit-text-stroke:0.2px #444">F</div>
<div class="t" style="left:426.40px;width:40px;text-align:center;top:149.26px;font-size:8.2px;color:#444;-webkit-text-stroke:0.2px #444">G</div>
<div class="t" style="left:471.85px;width:40px;text-align:center;top:149.26px;font-size:8.2px;color:#444;-webkit-text-stroke:0.2px #444">H</div>
<div class="t" style="left:517.35px;width:40px;text-align:center;top:149.26px;font-size:8.2px;color:#444;-webkit-text-stroke:0.2px #444">I</div>
<div class="t" style="left:562.90px;width:40px;text-align:center;top:149.26px;font-size:8.2px;color:#444;-webkit-text-stroke:0.2px #444">J</div>
<div class="t" style="left:608.45px;width:40px;text-align:center;top:149.26px;font-size:8.2px;color:#444;-webkit-text-stroke:0.2px #444">K</div>
<div class="t" style="left:0.7px;width:19.5px;text-align:center;top:167.29px;font-size:8.4px;color:#444;-webkit-text-stroke:0.2px #444">1</div>
<div class="t" style="left:0.7px;width:19.5px;text-align:center;top:182.77px;font-size:8.4px;color:#444;-webkit-text-stroke:0.2px #444">2</div>
<div class="t" style="left:0.7px;width:19.5px;text-align:center;top:197.05px;font-size:8.4px;color:#444;-webkit-text-stroke:0.2px #444">3</div>
<div class="t" style="left:0.7px;width:19.5px;text-align:center;top:211.33px;font-size:8.4px;color:#444;-webkit-text-stroke:0.2px #444">4</div>
<div class="t" style="left:0.7px;width:19.5px;text-align:center;top:225.61px;font-size:8.4px;color:#444;-webkit-text-stroke:0.2px #444">5</div>
<div class="t" style="left:0.7px;width:19.5px;text-align:center;top:239.89px;font-size:8.4px;color:#444;-webkit-text-stroke:0.2px #444">6</div>
<div class="t" style="left:0.7px;width:19.5px;text-align:center;top:254.17px;font-size:8.4px;color:#444;-webkit-text-stroke:0.2px #444">7</div>
<div class="t" style="left:0.7px;width:19.5px;text-align:center;top:268.45px;font-size:8.4px;color:#444;-webkit-text-stroke:0.2px #444">8</div>
<div class="t" style="left:0.7px;width:19.5px;text-align:center;top:282.73px;font-size:8.4px;color:#444;-webkit-text-stroke:0.2px #444">9</div>
<div class="t" style="left:0.7px;width:19.5px;text-align:center;top:297.01px;font-size:8.4px;color:#444;-webkit-text-stroke:0.2px #444">10</div>
<div class="t" style="left:0.7px;width:19.5px;text-align:center;top:311.29px;font-size:8.4px;color:#444;-webkit-text-stroke:0.2px #444">11</div>
<div class="t" style="left:0.7px;width:19.5px;text-align:center;top:325.57px;font-size:8.4px;color:#444;-webkit-text-stroke:0.2px #444">12</div>
<div class="t" style="left:0.7px;width:19.5px;text-align:center;top:339.85px;font-size:8.4px;color:#444;-webkit-text-stroke:0.2px #444">13</div>
<div class="t" style="left:0.7px;width:19.5px;text-align:center;top:354.13px;font-size:8.4px;color:#444;-webkit-text-stroke:0.2px #444">14</div>
<div class="t" style="left:0.7px;width:19.5px;text-align:center;top:368.41px;font-size:8.4px;color:#444;-webkit-text-stroke:0.2px #444">15</div>
<div class="t" style="left:0.7px;width:19.5px;text-align:center;top:382.69px;font-size:8.4px;color:#444;-webkit-text-stroke:0.2px #444">16</div>
<div class="t" style="left:0.7px;width:19.5px;text-align:center;top:396.97px;font-size:8.4px;color:#444;-webkit-text-stroke:0.2px #444">17</div>
<div class="t" style="left:0.7px;width:19.5px;text-align:center;top:411.25px;font-size:8.4px;color:#444;-webkit-text-stroke:0.2px #444">18</div>
<div class="t" style="left:0.7px;width:19.5px;text-align:center;top:425.53px;font-size:8.4px;color:#444;-webkit-text-stroke:0.2px #444">19</div>
<div class="t" style="left:21.80px;top:164.03px;font-size:12.6px;color:#44546a;font-weight:bold;transform:scaleX(0.9709);transform-origin:0 0;-webkit-text-stroke:0.05px #44546a;">Description</div>
<div class="t" style="left:97.30px;top:164.03px;font-size:12.6px;color:#44546a;font-weight:bold;transform:scaleX(0.9010);transform-origin:0 0;-webkit-text-stroke:0.05px #44546a;">Service</div>
<div class="t" style="left:214.80px;top:164.03px;font-size:12.6px;color:#44546a;font-weight:bold;transform:scaleX(0.9628);transform-origin:0 0;-webkit-text-stroke:0.05px #44546a;">Page Count</div>
<div class="t" style="left:294.50px;top:164.03px;font-size:12.6px;color:#44546a;font-weight:bold;transform:scaleX(0.9107);transform-origin:0 0;-webkit-text-stroke:0.05px #44546a;">Cost</div>
<div class="t" style="left:21.00px;top:183.31px;font-size:9.3px;color:#000;transform:scaleX(1.0257);transform-origin:0 0;-webkit-text-stroke:0.15px #000;">Q1 Invoice</div>
<div class="t" style="left:96.30px;top:183.31px;font-size:9.3px;color:#000;transform:scaleX(1.0331);transform-origin:0 0;-webkit-text-stroke:0.15px #000;">Tax Professional Services</div>
<div class="t" style="left:21.00px;top:197.59px;font-size:9.3px;color:#000;transform:scaleX(1.0257);transform-origin:0 0;-webkit-text-stroke:0.15px #000;">Q2 Invoice</div>
<div class="t" style="left:96.30px;top:197.59px;font-size:9.3px;color:#000;transform:scaleX(1.0331);transform-origin:0 0;-webkit-text-stroke:0.15px #000;">Tax Professional Services</div>
<div class="t" style="left:21.00px;top:211.87px;font-size:9.3px;color:#000;transform:scaleX(1.0257);transform-origin:0 0;-webkit-text-stroke:0.15px #000;">Q3 Invoice</div>
<div class="t" style="left:96.30px;top:211.87px;font-size:9.3px;color:#000;transform:scaleX(1.0331);transform-origin:0 0;-webkit-text-stroke:0.15px #000;">Tax Professional Services</div>
<div class="t" style="left:21.00px;top:226.15px;font-size:9.3px;color:#000;transform:scaleX(1.0257);transform-origin:0 0;-webkit-text-stroke:0.15px #000;">Q4 Invoice</div>
<div class="t" style="left:96.30px;top:226.15px;font-size:9.3px;color:#000;transform:scaleX(1.0331);transform-origin:0 0;-webkit-text-stroke:0.15px #000;">Tax Professional Services</div>
<div class="t" style="left:275.80px;top:183.31px;font-size:9.3px;color:#000;transform:scaleX(0.9087);transform-origin:0 0;-webkit-text-stroke:0.15px #000;">10</div>
<div class="t" style="left:292.70px;top:183.31px;font-size:9.3px;color:#000;transform:scaleX(0.9473);transform-origin:0 0;-webkit-text-stroke:0.15px #000;">$</div>
<div class="t" style="left:304.30px;top:183.31px;font-size:9.3px;color:#000;transform:scaleX(0.9582);transform-origin:0 0;-webkit-text-stroke:0.15px #000;">50.00</div>
<div class="t" style="left:275.80px;top:197.59px;font-size:9.3px;color:#000;transform:scaleX(0.9087);transform-origin:0 0;-webkit-text-stroke:0.15px #000;">50</div>
<div class="t" style="left:292.70px;top:197.59px;font-size:9.3px;color:#000;transform:scaleX(0.9473);transform-origin:0 0;-webkit-text-stroke:0.15px #000;">$</div>
<div class="t" style="left:298.40px;top:197.59px;font-size:9.3px;color:#000;transform:scaleX(0.9914);transform-origin:0 0;-webkit-text-stroke:0.15px #000;">200.00</div>
<div class="t" style="left:271.10px;top:211.87px;font-size:9.3px;color:#000;transform:scaleX(0.9087);transform-origin:0 0;-webkit-text-stroke:0.15px #000;">100</div>
<div class="t" style="left:292.70px;top:211.87px;font-size:9.3px;color:#000;transform:scaleX(0.9473);transform-origin:0 0;-webkit-text-stroke:0.15px #000;">$</div>
<div class="t" style="left:298.40px;top:211.87px;font-size:9.3px;color:#000;transform:scaleX(0.9914);transform-origin:0 0;-webkit-text-stroke:0.15px #000;">500.00</div>
<div class="t" style="left:271.10px;top:226.15px;font-size:9.3px;color:#000;transform:scaleX(0.9087);transform-origin:0 0;-webkit-text-stroke:0.15px #000;">250</div>
<div class="t" style="left:292.70px;top:226.15px;font-size:9.3px;color:#000;transform:scaleX(0.9473);transform-origin:0 0;-webkit-text-stroke:0.15px #000;">$</div>
<div class="t" style="left:298.40px;top:226.15px;font-size:9.3px;color:#000;transform:scaleX(0.9914);transform-origin:0 0;-webkit-text-stroke:0.15px #000;">800.00</div>
<div class="a" style="left:649.20px;top:139.40px;width:15.00px;height:292.80px;background:#e6e6e6;"></div>
<div class="a" style="left:651.20px;top:146.40px;width:10.80px;height:11.00px;background:#fff;border:1px solid #c8c8c8;border-radius:1.5px"></div>
<svg class="a" style="left:651.2px;top:146.4px" width="10.8" height="11" viewBox="0 0 10.8 11"><path d="M3.2 7h4.4L5.4 4.6z" fill="#555"/></svg>
<div class="a" style="left:651.70px;top:157.20px;width:10.20px;height:250.60px;background:#fff;border:1px solid #c8c8c8;border-top:none;border-radius:0 0 1.5px 1.5px"></div>
<div class="a" style="left:651.70px;top:407.80px;width:10.20px;height:14.20px;background:#d9d9d9;"></div>
<div class="a" style="left:651.70px;top:422.20px;width:10.20px;height:10.20px;background:#fff;border:1px solid #c8c8c8;border-radius:1.5px"></div>
<svg class="a" style="left:651.7px;top:422.2px" width="10.2" height="10.2" viewBox="0 0 10.2 10.2"><path d="M2.9 4.1h4.4L5.1 6.5z" fill="#555"/></svg>
<div class="a" style="left:648.60px;top:158.60px;width:1.00px;height:273.40px;background:#c8c8c8;"></div>
<div class="a" style="left:1.00px;top:431.70px;width:663.00px;height:19.60px;background:#e6e6e6;"></div>
<div class="a" style="left:1.00px;top:431.40px;width:663.00px;height:1.40px;background:#c8c8c8;"></div>
<svg class="a" style="left:0px;top:431px" width="665" height="21" viewBox="0 431 665 21">
<path d="M22.3 438.8v5.4l-2.5-2.7z" fill="#bdbdbd"/>
<path d="M40 438.8v5.4l2.5-2.7z" fill="#bdbdbd"/>
<circle cx="147.4" cy="441.5" r="5.2" fill="none" stroke="#666" stroke-width="0.9"/>
<path d="M144.5 441.5h5.8M147.4 438.6v5.8" stroke="#666" stroke-width="0.9"/>
</svg>
<div class="a" style="left:72.20px;top:431.70px;width:46.00px;height:17.50px;background:#fff;border-left:1px solid #c6c6c6;border-right:1px solid #c6c6c6"></div>
<div class="a" style="left:72.20px;top:447.60px;width:46.00px;height:1.60px;background:#217346;"></div>
<div class="t" style="left:80.30px;top:436.74px;font-size:9.4px;color:#217346;font-weight:bold;transform:scaleX(0.9797);transform-origin:0 0;-webkit-text-stroke:0.2px #217346;">Sheet1</div>
<svg class="a" style="left:395px;top:431px" width="10" height="20" viewBox="0 0 10 20"><circle cx="4.4" cy="7" r="0.55" fill="#888"/><circle cx="4.4" cy="10.5" r="0.55" fill="#888"/><circle cx="4.4" cy="13.8" r="0.55" fill="#888"/></svg>
<div class="a" style="left:410.80px;top:436.30px;width:10.80px;height:10.90px;background:#fff;border:1px solid #c8c8c8;border-radius:1.5px"></div>
<svg class="a" style="left:410.8px;top:436.3px" width="10.8" height="10.9" viewBox="0 0 10.8 10.9"><path d="M6.4 3.2v4.4L3.9 5.4z" fill="#555"/></svg>
<div class="a" style="left:421.60px;top:436.30px;width:195.20px;height:10.90px;background:#fff;border:1px solid #c8c8c8;border-radius:0 1.5px 1.5px 0"></div>
<div class="a" style="left:618.40px;top:436.80px;width:20.30px;height:10.00px;background:#d9d9d9;"></div>
<div class="a" style="left:640.10px;top:436.30px;width:10.50px;height:10.90px;background:#fff;border:1px solid #c8c8c8;border-radius:1.5px"></div>
<svg class="a" style="left:640.1px;top:436.3px" width="10.5" height="10.9" viewBox="0 0 10.5 10.9"><path d="M4.1 3.2v4.4l2.5-2.2z" fill="#555"/></svg>
<div class="a" style="left:1.00px;top:451.30px;width:663.00px;height:15.20px;background:#f3f3f3;"></div>
<div class="a" style="left:1.00px;top:451.30px;width:663.00px;height:0.80px;background:#d4d4d4;"></div>
<div class="t" style="left:6.20px;top:456.08px;font-size:9.0px;color:#444;transform:scaleX(0.8264);transform-origin:0 0;-webkit-text-stroke:0.2px #444;">Ready</div>
<div class="a" style="left:453.00px;top:451.80px;width:26.70px;height:14.70px;background:#d2d2d2;"></div>
<svg class="a" style="left:0px;top:451px" width="665" height="16" viewBox="0 451 665 16">
<g fill="none" stroke="#777" stroke-width="0.9">
<path d="M461.2 454.6h9.6v9.2h-9.6zM461.2 457.7h9.6M461.2 460.7h9.6M464.4 454.6v9.2M467.6 454.6v9.2" stroke="#6a6a6a"/>
<rect x="488.6" y="454.6" width="10" height="9.3" rx="1"/>
<path d="M491 456.5v5.5M496.2 456.5v5.5" />
<rect x="515.6" y="454.6" width="10" height="9.3" rx="1"/>
<path d="M518.5 454.6v4.5h3.5v-4.5"/>
</g>
<path d="M537.6 459.4h4.2" stroke="#444" stroke-width="1.1"/>
<path d="M545 459.4h70.4" stroke="#bdbdbd" stroke-width="0.9"/>
<path d="M578.7 455h3.6v7.6h-3.6z" fill="#6a6a6a"/>
<path d="M618.7 459.5h4.5M620.95 457.2v4.6" stroke="#444" stroke-width="1.1"/>
</svg>
<div class="t" style="left:631.90px;top:455.65px;font-size:8.8px;color:#444;transform:scaleX(0.8486);transform-origin:0 0;-webkit-text-stroke:0.2px #444;">100%</div>
<div class="a" style="left:1.10px;top:46.00px;width:0.90px;height:421.00px;background:#fbfbfb;"></div>
<div class="a" style="left:0.00px;top:46.00px;width:1.10px;height:422.00px;background:#2f7d55;"></div>
<div class="a" style="left:663.10px;top:46.00px;width:0.80px;height:421.00px;background:#fbfbfb;"></div>
<div class="a" style="left:663.90px;top:46.00px;width:1.10px;height:422.00px;background:#2f7d55;"></div>
<div class="a" style="left:1.10px;top:466.00px;width:662.80px;height:0.70px;background:#fbfbfb;"></div>
<div class="a" style="left:0.00px;top:466.70px;width:665.00px;height:1.30px;background:#2f7d55;"></div>
</div>
</body></html>
